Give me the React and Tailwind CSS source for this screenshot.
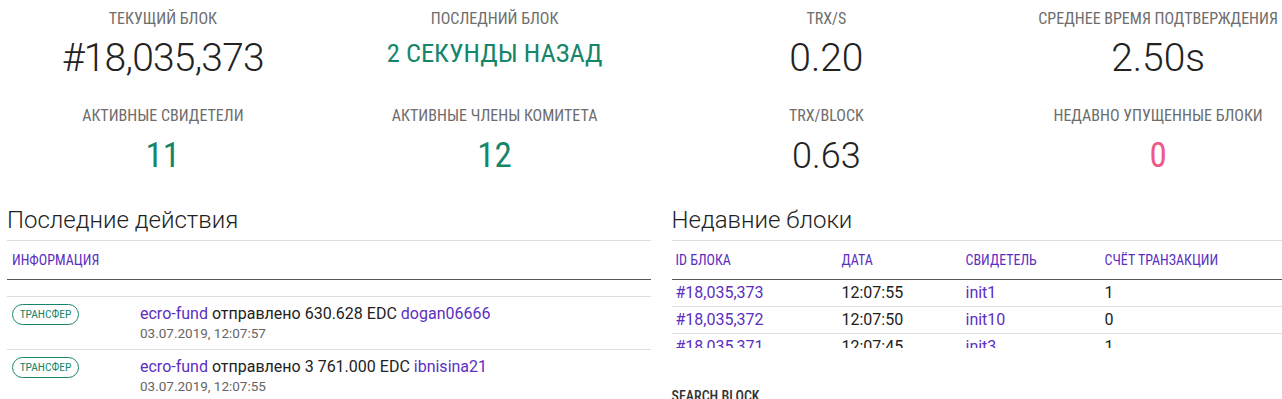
import React from "react";

const cond = "font-['Roboto_Condensed',Roboto,sans-serif] font-stretch-condensed";

function Stat({ label, value, valueClass, top, mt }) {
  return (
    <div className={`flex flex-col items-center h-[96px] ${top}`}>
      <div className={`${cond} text-[16px] leading-[20px] text-[#6d6d6d] whitespace-nowrap`}>{label}</div>
      <div className={`${valueClass} ${mt} whitespace-nowrap`}>{value}</div>
    </div>
  );
}

const big = "font-['Roboto',sans-serif] font-light text-[39px] leading-[48px] text-[#222]";
const mid = "font-['Roboto',sans-serif] font-light text-[36px] leading-[48px] text-[#222]";

export default function App() {
  const blocks = [
    ["#18,035,373", "12:07:55", "init1", "1"],
    ["#18,035,372", "12:07:50", "init10", "0"],
    ["#18,035,371", "12:07:45", "init3", "1"],
  ];
  const acts = [
    ["630.628", "dogan06666", "03.07.2019, 12:07:57"],
    ["3 761.000", "ibnisina21", "03.07.2019, 12:07:55"],
  ];
  return (
    <div className="w-[1282px] h-[399px] overflow-hidden bg-white font-['Roboto',sans-serif]">
      <div className="w-[1327px] ml-[-3px]">
        <div className="grid grid-cols-4">
          <Stat label="ТЕКУЩИЙ БЛОК" value="#18,035,373" valueClass={`${big} tracking-[-0.8px]`} top="pt-[9px]" mt="mt-[5px]" />
          <Stat label="ПОСЛЕДНИЙ БЛОК" value="2 СЕКУНДЫ НАЗАД" valueClass={`${cond} font-normal text-[26.5px] leading-[48px] text-[#16866a]`} top="pt-[9px]" mt="mt-0" />
          <Stat label="TRX/S" value="0.20" valueClass={big} top="pt-[9px]" mt="mt-[5px]" />
          <Stat label="СРЕДНЕЕ ВРЕМЯ ПОДТВЕРЖДЕНИЯ" value="2.50s" valueClass={big} top="pt-[9px]" mt="mt-[5px]" />
          <Stat label="АКТИВНЫЕ СВИДЕТЕЛИ" value="11" valueClass={`${cond} text-[35px] leading-[48px] text-[#16866a]`} top="pt-[10px]" mt="mt-[6px]" />
          <Stat label="АКТИВНЫЕ ЧЛЕНЫ КОМИТЕТА" value="12" valueClass={`${cond} text-[35px] leading-[48px] text-[#16866a]`} top="pt-[10px]" mt="mt-[6px]" />
          <Stat label="TRX/BLOCK" value="0.63" valueClass={mid} top="pt-[10px]" mt="mt-[6px]" />
          <Stat label="НЕДАВНО УПУЩЕННЫЕ БЛОКИ" value="0" valueClass={`${cond} text-[35px] leading-[48px] text-[#f0588a]`} top="pt-[10px]" mt="mt-[6px]" />
        </div>

        <div className="grid grid-cols-2 mt-[12px]">
          {/* left */}
          <div className="px-[10px]">
            <div className="text-[24px] font-light leading-[32px] text-[#222] pb-[4px] border-b border-[#dddde3]">Последние действия</div>
            <div className={`${cond} font-normal text-[14px] leading-[38px] text-[#5b2fc2] pl-[5px] border-b border-[#555]`}>ИНФОРМАЦИЯ</div>
            <div className="h-[17px] border-b border-[#dddde3]"></div>
            {acts.map((a, i) => (
              <div key={i} className="flex pt-[7px] pb-[7px] border-b border-[#dddde3]">
                <div className="w-[128px] pl-[5px] flex items-start">
                  <span className={`${cond} font-normal flex items-center justify-center h-[21px] w-[67px] rounded-full border border-[#16866a] text-[11.5px] text-[#16866a]`}>ТРАНСФЕР</span>
                </div>
                <div className="pl-[5px]">
                  <div className="text-[16px] leading-[20px] text-[#222] whitespace-nowrap">
                    <span className="text-[#5b2fc2]">ecro-fund</span> отправлено {a[0]} EDC <span className="text-[#5b2fc2]">{a[1]}</span>
                  </div>
                  <div className="text-[13.5px] leading-[18px] text-[#666]">{a[2]}</div>
                </div>
              </div>
            ))}
          </div>

          {/* right */}
          <div className="pl-[11px] pr-[10px]">
            <div className="text-[24px] font-light leading-[32px] text-[#222] pb-[4px] border-b border-[#dddde3]">Недавние блоки</div>
            <div className="h-[107px] overflow-hidden">
              <div className={`grid grid-cols-[166px_124px_139px_1fr] ${cond} font-normal text-[14px] leading-[38px] text-[#5b2fc2] border-b border-[#555]`}>
                <div className="pl-[4px]">ID БЛОКА</div>
                <div className="pl-[4px]">ДАТА</div>
                <div className="pl-[4px]">СВИДЕТЕЛЬ</div>
                <div className="pl-[4px]">СЧЁТ ТРАНЗАКЦИИ</div>
              </div>
              {blocks.map((b, i) => (
                <div key={i} className="grid grid-cols-[166px_124px_139px_1fr] text-[16px] leading-[26px] border-b border-[#dddde3]">
                  <div className="pl-[4px] text-[#5b2fc2]">{b[0]}</div>
                  <div className="pl-[4px] text-[#222]">{b[1]}</div>
                  <div className="pl-[4px] text-[#5b2fc2]">{b[2]}</div>
                  <div className="pl-[4px] text-[#222]">{b[3]}</div>
                </div>
              ))}
            </div>
            <div className={`${cond} font-medium text-[14px] leading-[20px] text-[#333] mt-[38px]`}>SEARCH BLOCK</div>
          </div>
        </div>
      </div>
    </div>
  );
}
